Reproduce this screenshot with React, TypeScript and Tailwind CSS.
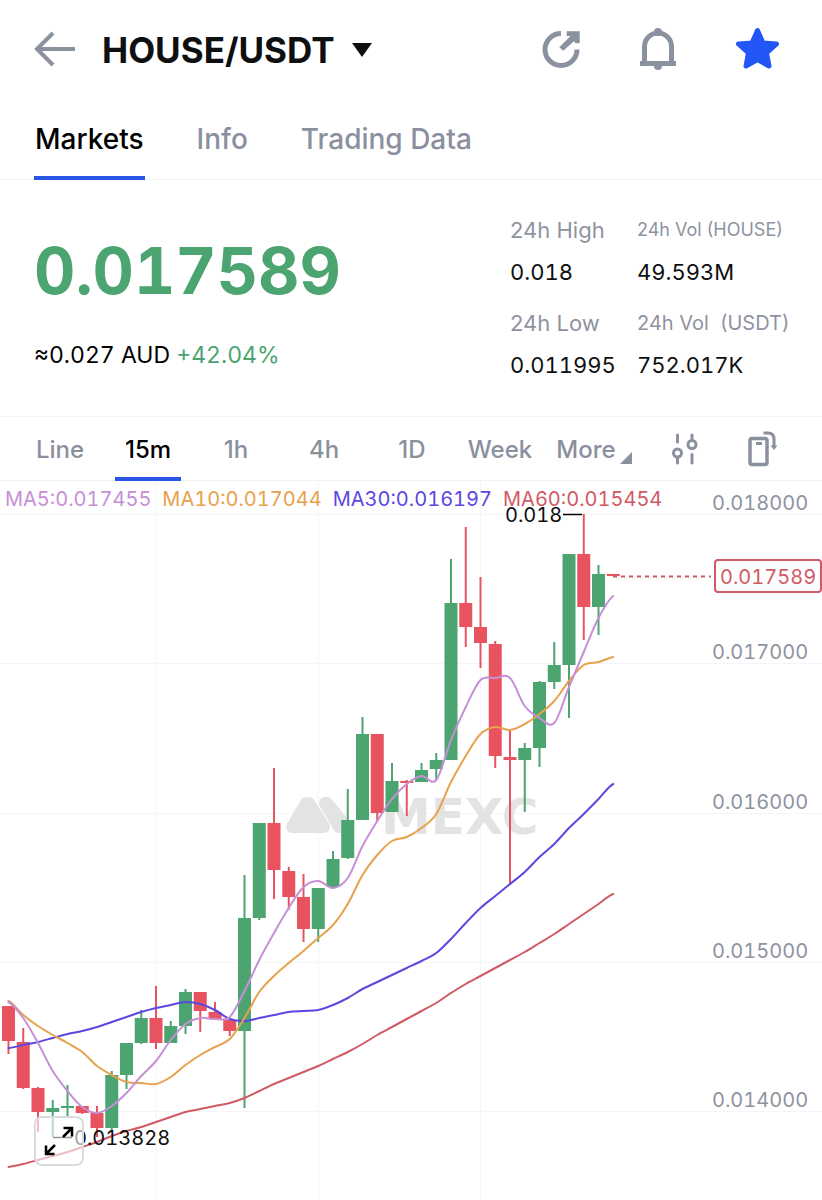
import { useState } from "react";

type Candle = {
  up: boolean;
  top: number;
  bottom: number;
  high: number;
  low: number;
};

const GREEN = "#4ca470";
const RED = "#e9535f";

// [direction, body top, body bottom, wick top, wick bottom]
const RAW: [number, number, number, number, number][] = [
  [0, 1006, 1041, 1006, 1054],
  [0, 1042, 1088, 1028, 1089],
  [0, 1088, 1112, 1087, 1132],
  [1, 1108, 1112, 1100, 1137],
  [1, 1106, 1108, 1085, 1118],
  [0, 1106, 1113, 1106, 1114],
  [0, 1113, 1128, 1106, 1137],
  [1, 1075, 1128, 1071, 1132],
  [1, 1043, 1075, 1043, 1089],
  [1, 1018, 1043, 1010, 1044],
  [0, 1018, 1043, 986, 1049],
  [1, 1026, 1043, 1021, 1043],
  [1, 992, 1026, 989, 1034],
  [0, 992, 1011, 992, 1032],
  [0, 1012, 1019, 1002, 1020],
  [0, 1020, 1031, 1018, 1036],
  [1, 918, 1031, 875, 1108],
  [1, 823, 918, 823, 920],
  [0, 823, 870, 768, 899],
  [0, 871, 897, 867, 910],
  [0, 897, 929, 874, 942],
  [1, 888, 929, 888, 942],
  [1, 859, 887, 851, 887],
  [1, 820, 858, 789, 859],
  [1, 734, 820, 717, 820],
  [0, 734, 813, 734, 821],
  [1, 781, 812, 763, 812],
  [0, 781, 783, 780, 816],
  [1, 770, 782, 763, 782],
  [1, 760, 769, 753, 780],
  [1, 603, 760, 559, 760],
  [0, 603, 627, 527, 647],
  [0, 627, 643, 577, 668],
  [0, 644, 756, 641, 768],
  [0, 757, 760, 730, 885],
  [1, 748, 760, 743, 812],
  [1, 682, 748, 681, 767],
  [1, 665, 682, 642, 689],
  [1, 554, 665, 554, 718],
  [0, 554, 607, 514, 640],
  [1, 574, 607, 565, 635],
  [0, 574, 576, 574, 576],
];

const CANDLES: Candle[] = RAW.map(([dir, top, bottom, high, low]) => ({
  up: dir === 1,
  top,
  bottom,
  high,
  low,
}));

const MA5 = [
  1002, 1018, 1043, 1071, 1091, 1107, 1113, 1106, 1093, 1076, 1061, 1040, 1024,
  1018, 1019, 1017, 991, 960, 933, 908, 887, 881, 888, 878, 846, 821, 799, 784,
  776, 780, 740, 707, 680, 678, 678, 706, 718, 723, 687, 652, 618, 596,
];

const MA10 = [
  1001, 1015, 1026, 1035, 1043, 1052, 1066, 1075, 1082, 1083, 1084, 1077, 1065,
  1055, 1047, 1039, 1018, 992, 976, 963, 951, 938, 925, 904, 875, 855, 841, 837,
  828, 814, 782, 756, 734, 727, 730, 724, 714, 701, 681, 665, 662, 657,
];

const MA30 = [
  1048, 1045, 1042, 1038, 1034, 1031, 1027, 1022, 1017, 1012, 1008, 1005, 1002,
  1004, 1010, 1019, 1021, 1018, 1015, 1012, 1011, 1010, 1005, 998, 989, 982,
  975, 968, 961, 953, 939, 923, 908, 896, 884, 872, 857, 844, 828, 814, 799,
  784,
];

const MA60 = [
  1167, 1164, 1160, 1156, 1152, 1147, 1142, 1136, 1131, 1127, 1122, 1117, 1112,
  1109, 1106, 1103, 1098, 1091, 1084, 1078, 1072, 1066, 1059, 1052, 1044, 1035,
  1027, 1019, 1011, 1003, 993, 984, 976, 968, 960, 952, 943, 934, 924, 914, 904,
  894,
];

const AVERAGES = [
  { label: "MA60:0.015454", stroke: "#d05a66", text: "text-[#d05a66]", points: MA60 },
  { label: "MA30:0.016197", stroke: "#5b48e0", text: "text-[#5b48e0]", points: MA30 },
  { label: "MA10:0.017044", stroke: "#e6a24c", text: "text-[#e6a24c]", points: MA10 },
  { label: "MA5:0.017455", stroke: "#c78fd6", text: "text-[#c78fd6]", points: MA5 },
];

const PRICE_LEVELS = [
  { y: 514, label: "0.018000" },
  { y: 663, label: "0.017000" },
  { y: 813, label: "0.016000" },
  { y: 962, label: "0.015000" },
  { y: 1111, label: "0.014000" },
];

const candleX = (i: number) => 8.5 + i * 14.75;

// Catmull-Rom through every point, written as cubic beziers
function smoothPath(ys: number[]) {
  let d = `M${candleX(0)} ${ys[0]}`;
  for (let i = 0; i < ys.length - 1; i++) {
    const before = ys[i - 1] ?? ys[i];
    const after = ys[i + 2] ?? ys[i + 1];
    const c1 = ys[i] + (ys[i + 1] - before) / 6;
    const c2 = ys[i + 1] - (after - ys[i]) / 6;
    const step = 14.75 / 3;
    d += ` C${candleX(i) + step} ${c1} ${candleX(i + 1) - step} ${c2} ${candleX(i + 1)} ${ys[i + 1]}`;
  }
  return d;
}

const Header = () => (
  <header className="flex h-[98px] items-center pr-[43px] pl-[34px]">
    <button type="button" aria-label="Back">
      <svg width="42" height="36" viewBox="0 0 42 36" fill="none" stroke="#8a919f" strokeWidth="4">
        <path d="M19 2 3 18l16 16M3 18h38" />
      </svg>
    </button>
    <button type="button" className="ml-[26px] flex items-center gap-4 pt-0.5">
      <h1 className="text-[35px] leading-10 font-bold text-[#0e0f11]">HOUSE/USDT</h1>
      <svg width="22" height="14" viewBox="0 0 22 14" fill="#0e0f11">
        <path d="M1 0h20L11 14z" />
      </svg>
    </button>
    <div className="ml-auto flex items-center gap-[57px]">
      <button type="button" aria-label="Share">
        <svg width="40" height="40" viewBox="0 0 40 40" fill="none">
          <path d="M20 4.500A16 16 0 1 0 36 20.500" stroke="#8a919f" strokeWidth="5" />
          <path d="M25.700 2.300h13v12h-4l-1.700-2L22.300 21.700l-4-3.500L29.500 7h-3.800z" fill="#8a919f" />
        </svg>
      </button>
      <button type="button" aria-label="Price alert">
        <svg width="40" height="44" viewBox="0 0 40 44" fill="#8a919f">
          <path d="M6.500 36V19.500a13.500 13.500 0 0 1 27 0V36" fill="none" stroke="#8a919f" strokeWidth="5" />
          <path d="M2 34h36v5H2z" />
          <circle cx="20" cy="5" r="4" />
          <circle cx="20" cy="39" r="4" />
        </svg>
      </button>
      <button type="button" aria-label="Remove from favourites">
        <svg width="44" height="44" viewBox="0 0 44 44">
          <path
            d="M22.500 3.500 28 16l13.500 1-10 9 2.500 13-11.500-6.500L11 39l2.500-13-10-9L17 16z"
            fill="#2356f6"
            stroke="#2356f6"
            strokeWidth="5"
            strokeLinejoin="round"
          />
        </svg>
      </button>
    </div>
  </header>
);

const Tabs = () => {
  const [active, setActive] = useState("Markets");
  return (
    <nav className="flex h-[82px] gap-[51px] border-b border-[#f1f2f4] pl-[34px]">
      {["Markets", "Info", "Trading Data"].map((tab) => (
        <button
          key={tab}
          type="button"
          onClick={() => setActive(tab)}
          className={`-mb-px border-b-4 px-px pt-1 text-[28px] font-medium ${
            tab === active ? "border-[#2a55e5] text-black" : "border-transparent text-[#8a909d]"
          }`}
        >
          {tab}
        </button>
      ))}
    </nav>
  );
};

const Stat = ({ label, value, size = "text-[22px]" }: { label: string; value: string; size?: string }) => (
  <div>
    <dt className={`leading-[30px] whitespace-pre text-[#8e93a0] ${size}`}>{label}</dt>
    <dd className="mt-3 text-[22px] leading-[30px] text-[#0e0f11] tabular-nums">{value}</dd>
  </div>
);

const Summary = () => (
  <section className="flex justify-between border-b border-[#f4f5f6] pt-[35px] pr-9 pb-9 pl-[34px]">
    <div className="pt-6">
      <p className="text-[64px] leading-16 font-bold text-[#4ca470] tabular-nums">0.017589</p>
      <p className="mt-9 text-[23px] leading-8 whitespace-pre tabular-nums">
        ≈0.027 AUD <span className="text-[#4ca470]">+42.04%</span>
      </p>
    </div>
    <dl className="grid grid-cols-[127px_149px] gap-y-[21px]">
      <Stat label="24h High" value="0.018" />
      <Stat label="24h Vol (HOUSE)" value="49.593M" size="text-[18px]" />
      <Stat label="24h Low" value="0.011995" />
      <Stat label="24h Vol  (USDT)" value="752.017K" size="text-[20px]" />
    </dl>
  </section>
);

const Toolbar = () => {
  const [frame, setFrame] = useState("15m");
  return (
    <div className="grid h-16 grid-cols-[repeat(6,88fr)_100fr_82fr_72fr] justify-items-center border-b border-[#f1f2f4] pr-6 pl-4 text-[24px] font-medium text-[#8a909d]">
      {["Line", "15m", "1h", "4h", "1D", "Week"].map((item) => (
        <button
          key={item}
          type="button"
          onClick={() => setFrame(item)}
          className={`-mb-px border-b-4 px-[10px] pt-1.5 ${
            item === frame ? "border-[#2a55e5] text-black" : "border-transparent"
          }`}
        >
          {item}
        </button>
      ))}
      <button type="button" className="flex items-center gap-1 pt-0.5">
        More
        <svg width="12" height="12" viewBox="0 0 12 12" fill="#8a909d" className="mt-4">
          <path d="M12 0v12H0z" />
        </svg>
      </button>
      <button type="button" aria-label="Indicators">
        <svg width="30" height="34" viewBox="0 0 30 34" fill="none" stroke="#8a909d" strokeWidth="3">
          <path d="M7.500 3v7M7.500 26v5M22 3v4M22 22.500V31" strokeLinecap="round" />
          <circle cx="7.500" cy="21" r="4" />
          <circle cx="22" cy="12.500" r="4" />
        </svg>
      </button>
      <button type="button" aria-label="Rotate screen">
        <svg width="32" height="38" viewBox="0 0 32 38" fill="none" stroke="#8a909d" strokeWidth="3.500">
          <rect x="4" y="8.500" width="17" height="26" rx="2" />
          <path d="M10 13.500h6" strokeWidth="3" />
          <path d="M17.500 3H22q6 0 6 6v7" strokeWidth="3" />
          <path d="M24.500 15.500h7L28 20z" fill="#8a909d" stroke="none" />
        </svg>
      </button>
    </div>
  );
};

const Watermark = () => (
  <g fill="#e3e3e3" stroke="#e3e3e3" strokeLinejoin="round">
    <path d="M306 803 292 827h32L309 803z" strokeWidth="12" />
    <path d="M325 803 339 827h8L327 803z" strokeWidth="12" />
    <text x="381" y="834" fontSize="50" fontWeight="700" stroke="none" fontFamily="DejaVu Sans, sans-serif">
      MEXC
    </text>
  </g>
);

const Chart = () => (
  <section className="relative">
    <ul className="absolute top-2 left-[5px] flex flex-row-reverse gap-[11px] text-[20px] leading-5 tabular-nums">
      {AVERAGES.map(({ label, text }) => (
        <li key={label} className={text}>
          {label}
        </li>
      ))}
    </ul>

    <svg viewBox="0 481 822 719" className="block h-auto w-full tabular-nums" role="img" aria-label="HOUSE/USDT 15 minute candles">
      <g stroke="#f4f5f6" strokeWidth="1">
        {PRICE_LEVELS.map(({ y }) => (
          <path key={y} d={`M0 ${y}.5H822`} />
        ))}
        <path d="M156.500 481V1200M318.500 481V1200M480.500 481V1200" />
      </g>

      <Watermark />

      {CANDLES.map((c, i) => (
        <g key={i} fill={c.up ? GREEN : RED}>
          <rect x={candleX(i) - 1} y={c.high} width="2" height={c.low - c.high} />
          <rect x={candleX(i) - 6.5} y={c.top} width="13" height={c.bottom - c.top} />
        </g>
      ))}

      {AVERAGES.map(({ label, stroke, points }) => (
        <path key={label} d={smoothPath(points)} fill="none" stroke={stroke} strokeWidth="2" strokeLinecap="round" />
      ))}

      <path d="M563 514.500h19M53 1137.500h19" stroke="#000" strokeWidth="1.500" />
      <g fontSize="20" fill="#0e0f11">
        <text x="505" y="522">0.018</text>
        <text x="74" y="1145">0.013828</text>
      </g>

      <g fontSize="20" fill="#8e93a0">
        {PRICE_LEVELS.map(({ y, label }) => (
          <text key={label} x="712" y={y - 4}>
            {label}
          </text>
        ))}
      </g>

      <path d="M613 576.500h98" stroke="#d05a66" strokeWidth="2" strokeDasharray="4 4" />
      <rect x="715" y="560" width="106" height="32" rx="3" fill="#fff" stroke="#d05a66" strokeWidth="2" />
      <text x="720" y="584" fontSize="20" fill="#d05a66">
        0.017589
      </text>
    </svg>

    <button
      type="button"
      aria-label="Full screen"
      className="absolute bottom-[34px] left-[34px] flex size-[50px] items-center justify-center rounded-lg border-2 border-[#d9dbdf] bg-white/60"
    >
      <svg width="30" height="30" viewBox="0 0 30 30" fill="none" stroke="#000" strokeWidth="2.500">
        <path d="M19 11 28 2M19.500 2H28v8.500M11 19 2 28M2 19.500V28h8.500" />
      </svg>
    </button>
  </section>
);

export default function App() {
  return (
    <main className="min-h-screen bg-white font-[Inter,sans-serif] text-black">
      <Header />
      <Tabs />
      <Summary />
      <Toolbar />
      <Chart />
    </main>
  );
}
